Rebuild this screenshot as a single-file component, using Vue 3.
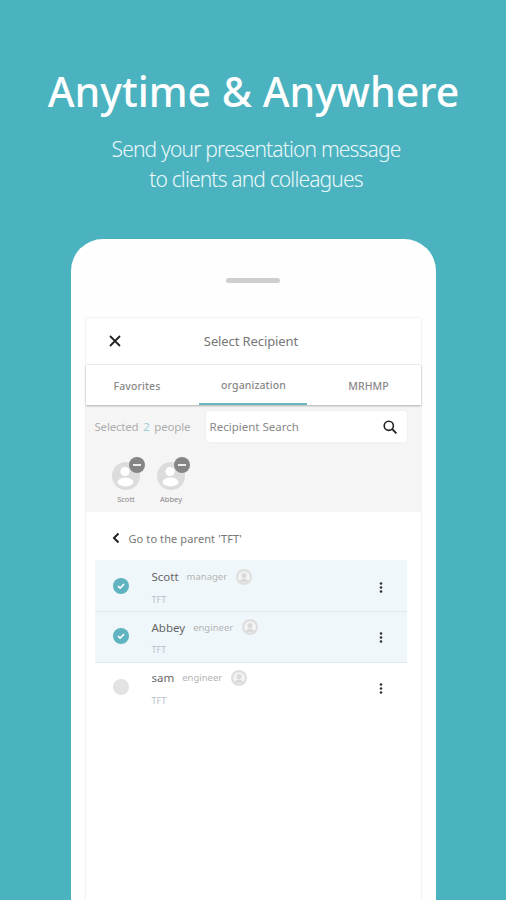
<script setup>
const tabs = [
  { name: 'Favorites', active: false },
  { name: 'organization', active: true },
  { name: 'MRHMP', active: false }
];

const selected = ['Scott', 'Abbey'];

const people = [
  { name: 'Scott', role: 'manager', group: 'TFT', checked: true },
  { name: 'Abbey', role: 'engineer', group: 'TFT', checked: true },
  { name: 'sam', role: 'engineer', group: 'TFT', checked: false }
];
</script>

<template>
  <div class="page">
    <h1 class="title">Anytime &amp; Anywhere</h1>
    <p class="subtitle">Send your presentation message<br />to clients and colleagues</p>

    <div class="phone">
      <div class="speaker"></div>
      <div class="screen">
        <div class="header">
          <svg class="close" width="14" height="14" viewBox="0 0 14 14">
            <path d="M2 2l10 10M12 2L2 12" stroke="#222" stroke-width="1.8" fill="none" />
          </svg>
          <span class="header-title">Select Recipient</span>
        </div>

        <div class="tabs">
          <div v-for="tab in tabs" :key="tab.name" class="tab" :class="{ active: tab.active }">
            {{ tab.name }}
          </div>
        </div>

        <div class="selected-panel">
          <div class="search-row">
            <span class="count">Selected <em>2</em> people</span>
            <div class="search">
              <span>Recipient Search</span>
              <svg width="16" height="16" viewBox="0 0 16 16">
                <circle cx="6.8" cy="6.8" r="4.6" stroke="#222" stroke-width="1.6" fill="none" />
                <path d="M10.2 10.2l4.2 4.2" stroke="#222" stroke-width="1.9" fill="none" />
              </svg>
            </div>
          </div>
          <div class="chips">
            <div v-for="name in selected" :key="name" class="chip">
              <div class="chip-avatar">
                <svg width="30" height="30" viewBox="0 0 30 30">
                  <circle cx="15" cy="15" r="14" fill="#dcdcdc" />
                  <circle cx="14" cy="10.5" r="4.6" fill="#fff" />
                  <ellipse cx="14.5" cy="21" rx="8" ry="4.4" fill="#fff" />
                </svg>
                <span class="remove"></span>
              </div>
              <span class="chip-name">{{ name }}</span>
            </div>
          </div>
        </div>

        <div class="parent-link">
          <svg width="8" height="12" viewBox="0 0 8 12">
            <path d="M6.5 1.5L2 6l4.5 4.5" stroke="#222" stroke-width="2" fill="none" />
          </svg>
          <span>Go to the parent 'TFT'</span>
        </div>

        <div class="list">
          <div v-for="person in people" :key="person.name" class="row" :class="{ checked: person.checked }">
            <span class="check">
              <svg v-if="person.checked" width="16" height="16" viewBox="0 0 16 16">
                <path d="M5 8.200l2.100 2 3.900-4.100" stroke="#fff" stroke-width="1.6" fill="none" />
              </svg>
            </span>
            <div class="info">
              <div class="info-top">
                <span class="name">{{ person.name }}</span>
                <span class="role">{{ person.role }}</span>
                <svg width="16" height="16" viewBox="0 0 16 16">
                  <circle cx="8" cy="8" r="8" fill="#dedede" />
                  <circle cx="8" cy="8" r="5.800" fill="#f4f4f4" />
                  <circle cx="8" cy="6.600" r="2.600" fill="#dadada" />
                  <path d="M3.800 13c.5-2.600 2.200-3.600 4.200-3.600s3.700 1 4.200 3.600z" fill="#dadada" />
                </svg>
              </div>
              <div class="group">{{ person.group }}</div>
            </div>
            <svg class="more" width="4" height="11" viewBox="0 0 4 11">
              <circle cx="2" cy="1.500" r="1.300" fill="#333" />
              <circle cx="2" cy="5.500" r="1.300" fill="#333" />
              <circle cx="2" cy="9.500" r="1.300" fill="#333" />
            </svg>
          </div>
        </div>
      </div>
    </div>
  </div>
</template>

<style>
html,
body {
  margin: 0;
  overflow: hidden;
}
</style>

<style scoped>
.page {
  width: 506px;
  height: 900px;
  overflow: hidden;
  background: #4bb2c0;
  font-family: 'Noto Sans', 'Noto Sans CJK KR', sans-serif;
  display: flex;
  flex-direction: column;
  align-items: center;
}
.title {
  margin: 61px 0 0 1px;
  font-size: 41px;
  line-height: 60px;
  font-weight: 500;
  color: #fff;
  white-space: nowrap;
}
.subtitle {
  margin: 13px 0 0 6px;
  font-size: 21px;
  line-height: 30px;
  font-weight: 300;
  letter-spacing: -0.85px;
  text-align: center;
  color: #eaf8f9;
}
.phone {
  margin-top: 45px;
  width: 365px;
  flex: 1;
  background: #fefefe;
  border-radius: 32px 32px 0 0;
  padding: 0 15px;
  box-sizing: border-box;
  display: flex;
  flex-direction: column;
  align-items: center;
}
.speaker {
  margin: 39px 0 35px;
  width: 54px;
  height: 5px;
  flex: none;
  border-radius: 3px;
  background: #cfcfcf;
}
.screen {
  width: 335px;
  flex: 1;
  background: #fff;
  box-shadow: 0 0 2px rgba(0, 0, 0, 0.14);
}
.header {
  height: 46px;
  display: flex;
  align-items: center;
  justify-content: center;
  position: relative;
  border-bottom: 1px solid #f0f0f0;
}
.close {
  position: absolute;
  left: 22px;
  top: 16px;
}
.header-title {
  margin-right: 4px;
  font-size: 13px;
  color: #777;
  letter-spacing: -0.1px;
}
.tabs {
  height: 40px;
  display: grid;
  grid-template-columns: 113px 108px 114px;
  box-shadow: 0 1px 2px rgba(0, 0, 0, 0.3);
  position: relative;
}
.tab {
  display: flex;
  align-items: center;
  justify-content: center;
  font-size: 10.5px;
  font-weight: 500;
  letter-spacing: 0.1px;
  color: #888;
  box-sizing: border-box;
  padding-top: 1px;
}
.tab:first-child {
  padding-right: 10px;
}
.tab:last-child {
  padding-left: 10px;
}
.tab.active {
  padding-left: 2px;
  border-bottom: 2px solid #6bb5c2;
}
.selected-panel {
  height: 107px;
  background: #f5f5f5;
  box-sizing: border-box;
  padding: 6px 14px 0 9px;
}
.search-row {
  display: flex;
  align-items: center;
  justify-content: space-between;
}
.count {
  font-size: 11.5px;
  color: #adadad;
  letter-spacing: -0.2px;
}
.count em {
  font-style: normal;
  color: #9ccfd4;
  margin: 0 2px;
}
.search {
  width: 201px;
  height: 31px;
  background: #fff;
  border-radius: 3px;
  box-sizing: border-box;
  padding: 0 9px 0 4px;
  display: flex;
  align-items: center;
  justify-content: space-between;
  font-size: 11.5px;
  color: #888;
  box-shadow: 0 0 2px rgba(0, 0, 0, 0.08);
}
.chips {
  display: flex;
  gap: 14px;
  margin-top: 19px;
  padding-left: 16px;
}
.chip {
  width: 31px;
  display: flex;
  flex-direction: column;
  align-items: center;
}
.chip-avatar {
  position: relative;
  height: 30px;
}
.remove {
  position: absolute;
  right: -4px;
  top: -4px;
  width: 16px;
  height: 16px;
  border-radius: 50%;
  background: #858585;
}
.remove::after {
  content: '';
  position: absolute;
  left: 4px;
  top: 7px;
  width: 8px;
  height: 2px;
  background: #eee;
}
.chip-name {
  margin-top: 2px;
  font-size: 7.5px;
  line-height: 12px;
  color: #888;
}
.parent-link {
  height: 48px;
  box-sizing: border-box;
  padding: 4px 0 0 26px;
  display: flex;
  align-items: center;
  gap: 9px;
  font-size: 11px;
  letter-spacing: 0.1px;
  color: #777;
}
.list {
  padding: 0 14px 0 9px;
}
.row {
  height: 51px;
  display: flex;
  align-items: center;
  box-sizing: border-box;
  border-bottom: 1px solid #dfe9ee;
  padding: 0 24px 2px 18px;
}
.row.checked {
  background: #f0f7fa;
}
.row:first-child {
  height: 52px;
  padding-bottom: 0;
}
.row:last-child {
  border-bottom: none;
  padding-bottom: 4px;
}
.check {
  width: 16px;
  height: 16px;
  flex: none;
  border-radius: 50%;
  background: #e3e3e3;
}
.row.checked .check {
  background: #60b3c0;
}
.check svg {
  display: block;
}
.info {
  flex: 1;
  margin: 2px 0 0 23px;
}
.info-top {
  display: flex;
  align-items: center;
  height: 20px;
}
.name {
  font-size: 11.5px;
  color: #666;
}
.role {
  margin: 0 9px 0 8px;
  font-size: 9.5px;
  color: #b4b4b4;
}
.group {
  margin-top: 6px;
  font-size: 9px;
  line-height: 14px;
  color: #b5c0cc;
}
.more {
  margin-top: 3px;
}
</style>
